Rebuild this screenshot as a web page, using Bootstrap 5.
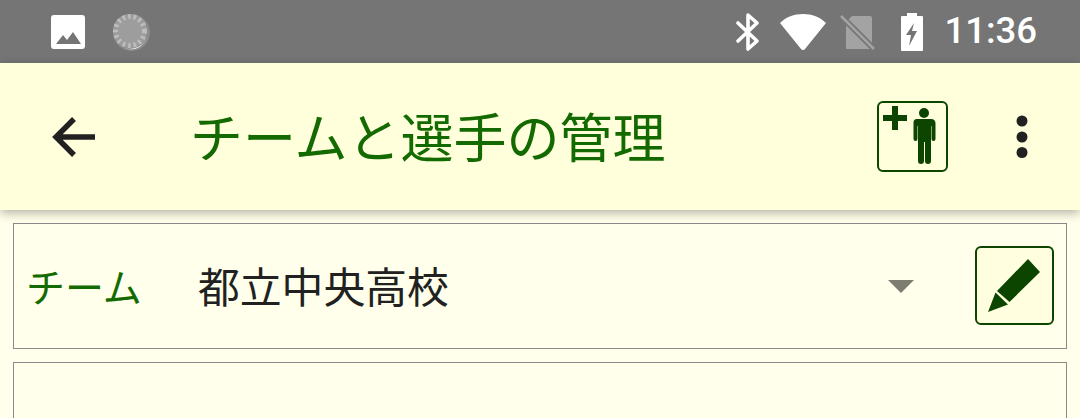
<!DOCTYPE html>
<html lang="ja">
<head>
  <meta charset="UTF-8">
  <meta name="viewport" content="width=device-width, initial-scale=1.0">
  <title>チームと選手の管理</title>
  <link href="https://cdn.jsdelivr.net/npm/bootstrap@5.3.0/dist/css/bootstrap.min.css" rel="stylesheet">
  <style>
    html, body { height: 418px; overflow: hidden; }
    body { background: #ffffeb; font-family: "Noto Sans CJK JP", sans-serif; }
    .status-bar { height: 63px; background: #757575; padding: 0 43px 0 51px; }
    .status-time { font: 500 36.500px/1 Roboto, sans-serif; color: #fff; margin-left: 21px; }
    .spinner-icon { margin-left: 26px; }
    .wifi-icon { margin-left: 21px; }
    .sim-icon { margin-left: 14px; }
    .battery-icon { margin-left: 25px; }
    .app-bar { height: 147px; background: #ffffdc; padding: 0 51px; box-shadow: 0 3px 10px rgba(0,0,0,.3); position: relative; }
    .app-title { font-size: 53px; line-height: 1; color: #136a00; margin: 0 0 3px 93px; font-weight: 400; }
    .overflow-dots { margin-left: 67px; }
    .team-box { margin: 13px 13px 0; height: 126px; border: 1px solid #8a8a8a; padding: 0 12px 1px 12px; }
    .team-label { width: 172px; font-size: 39px; color: #136a00; line-height: 1; }
    .team-name { font-size: 41.800px; color: #212121; line-height: 1; }
    .caret-down { width: 0; height: 0; border: 13.500px solid transparent; border-top: 13px solid #7d7d72; border-bottom: 0; margin: 1px 61px 0 0; }
    .edit-btn { width: 79px; height: 79px; padding: 0; background: #ffffdf; border: 2px solid #0b4500; border-radius: 6px; }
    .player-box { margin: 13px 13px 0; height: 56px; border: 1px solid #8a8a8a; border-bottom: 0; }
  </style>
</head>
<body>
  <!-- Status bar -->
  <div class="status-bar d-flex align-items-center">
    <svg width="34" height="34" viewBox="0 0 34 34"><path fill="#fff" fill-rule="evenodd" d="M3 0h28a3 3 0 0 1 3 3v28a3 3 0 0 1-3 3H3a3 3 0 0 1-3-3V3a3 3 0 0 1 3-3zM5 29h25L22 17l-6 8-4-5z"/></svg>
    <svg class="spinner-icon" width="40" height="40" viewBox="0 0 40 40">
      <circle cx="20.500" cy="20.500" r="18.500" fill="#8c8c8c"/>
      <path d="M36 25a17 17 0 0 1-23 11 18 17 0 0 0 23-11z" fill="#fff"/>
      <circle cx="19" cy="19" r="17" fill="#9d9d9d"/>
      <circle cx="19" cy="19" r="14.500" fill="none" stroke="#bdbdbd" stroke-width="5" stroke-dasharray="2.500 3"/>
    </svg>
    <div class="ms-auto d-flex align-items-center">
      <svg width="24" height="38" viewBox="0 0 24 38"><path fill="none" stroke="#fff" stroke-width="3.600" stroke-linecap="round" stroke-linejoin="round" d="M3 10l19 18-9 8V2l9 8L3 28"/></svg>
      <svg class="wifi-icon" width="46" height="38" viewBox="0 0 46 38"><path fill="#fff" d="M0 10C6 4 14 1 23 1s17 3 23 9L25 36a2.500 2.500 0 0 1-4 0z"/></svg>
      <svg class="sim-icon" width="36" height="38" viewBox="0 0 36 38"><path fill="#a3a3a3" d="M12 3h18a2 2 0 0 1 2 2v31H6V9z"/><path stroke="#757575" stroke-width="6" d="M0 2l35 35"/><path stroke="#a3a3a3" stroke-width="2.500" d="M1 3l33 33"/></svg>
      <svg class="battery-icon" width="22" height="38" viewBox="0 0 22 38"><path fill="#fff" fill-rule="evenodd" d="M6 0h10v3h5a1 1 0 0 1 1 1v33a1 1 0 0 1-1 1H1a1 1 0 0 1-1-1V4a1 1 0 0 1 1-1h5zM13 10L5 22h5l-2 11 8-15h-5z"/></svg>
      <span class="status-time">11:36</span>
    </div>
  </div>

  <!-- App bar -->
  <header class="app-bar d-flex align-items-center">
    <svg width="46" height="42" viewBox="0 0 46 42"><path fill="none" stroke="#212121" stroke-width="5.500" d="M44 21H6M23 3L5 21l18 18"/></svg>
    <h1 class="app-title">チームと選手の管理</h1>
    <svg class="ms-auto" width="71" height="71" viewBox="0 0 71 71">
      <rect x="1" y="1" width="69" height="69" rx="5" fill="none" stroke="#0b4500" stroke-width="2"/>
      <path fill="#0b4500" d="M15 5h6v9h9v6h-9v9h-6v-9H6v-6h9z"/>
      <circle cx="47" cy="12" r="5" fill="#0b4500"/>
      <path fill="#0b4500" d="M40 18h14q4.500 0 4.500 4.500V38a2 2 0 0 1-4 0V25h-.5v35a3 3 0 0 1-6 0V41h-1v19a3 3 0 0 1-6 0V25h-.5V38a2 2 0 0 1-4 0V22.500Q36 18 40 18z"/>
    </svg>
    <svg class="overflow-dots" width="14" height="44" viewBox="0 0 14 44"><g fill="#212121"><circle cx="7" cy="6" r="5.500"/><circle cx="7" cy="22" r="5.500"/><circle cx="7" cy="37.500" r="5.500"/></g></svg>
  </header>

  <!-- Team selector -->
  <div class="team-box d-flex align-items-center">
    <div class="team-label">チーム</div>
    <div class="team-name flex-grow-1">都立中央高校</div>
    <div class="caret-down"></div>
    <button type="button" class="btn edit-btn d-flex align-items-center justify-content-center">
      <svg width="55" height="55" viewBox="0 0 55 55"><path fill="#0b4500" d="M41 1l12 13-30.500 30L10 33zM8.500 34.500L21 46.500 1 54z"/></svg>
    </button>
  </div>

  <div class="player-box"></div>
</body>
</html>
